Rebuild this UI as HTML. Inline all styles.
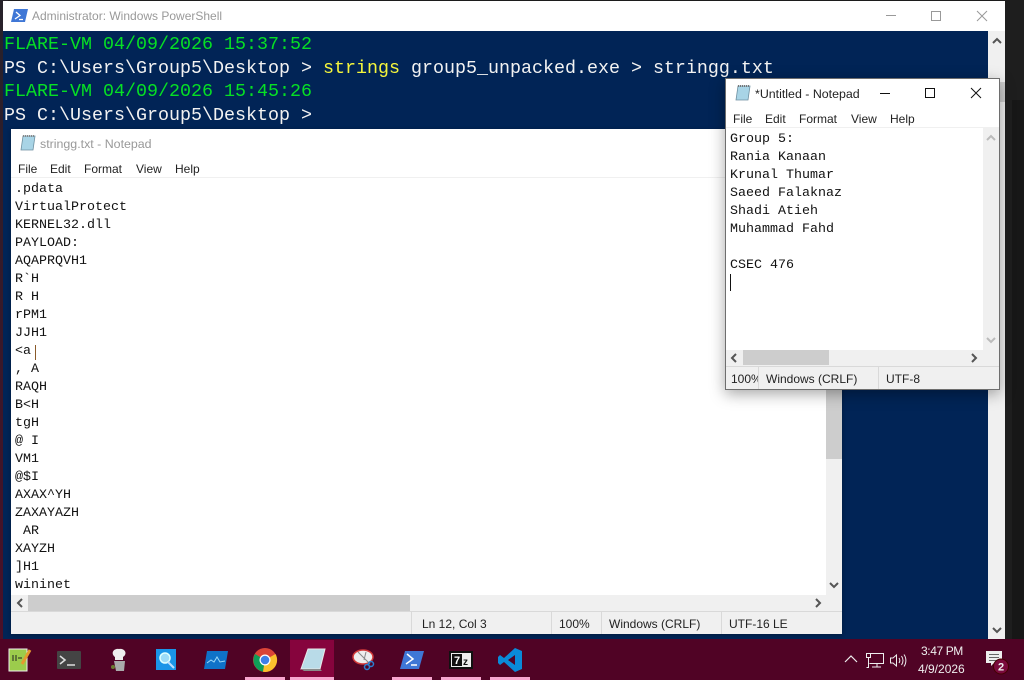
<!DOCTYPE html>
<html><head><meta charset="utf-8"><style>
html,body{margin:0;padding:0;width:1024px;height:680px;overflow:hidden;background:#1c1c1c;font-family:"Liberation Sans",sans-serif}
div{position:absolute;box-sizing:border-box}
.t{white-space:pre;position:absolute}
.ps{font:18.33px/24px "Liberation Mono",monospace;color:#f2f2f2;left:4px;white-space:pre;position:absolute}
.g{color:#06e024}.y{color:#f5f53c}
.ln{font:13.33px/18px "Liberation Mono",monospace;color:#111;white-space:pre;position:absolute}
.m{font-size:12px;color:#222;position:absolute;white-space:pre}
.pb{position:absolute;top:677px;width:40px;height:3px;background:#f7a6cf}
svg{position:absolute;overflow:visible}
</style></head><body>
<div style="left:0;top:0;width:8px;height:640px;background:linear-gradient(#26222a,#4a1028)"></div>
<div style="left:1005px;top:0;width:19px;height:640px;background:#1e1e1e"></div>
<div style="left:1012px;top:100px;width:12px;height:540px;background:#171717"></div>
<div style="left:3px;top:1px;width:1002px;height:30px;background:#fff"></div>
<div style="left:3px;top:31px;width:985px;height:608px;background:#012456"></div>
<div style="left:988px;top:31px;width:17px;height:608px;background:#f0f0f0"></div>
<div style="left:988px;top:82px;width:17px;height:20px;background:#cdcdcd"></div>
<svg style="left:992px;top:36px" width="10" height="10"><path d="M1 7L5 3L9 7" fill="none" stroke="#555" stroke-width="2"/></svg>
<svg style="left:992px;top:626px" width="10" height="10"><path d="M1 2L5 6L9 2" fill="none" stroke="#555" stroke-width="2"/></svg>
<svg style="left:11px;top:9px" width="17" height="14"><path d="M3 0H17L14 13H0Z" fill="#3f77d6"/><path d="M5 3L9 6.500L4 10M8 10.500H12" fill="none" stroke="#fff" stroke-width="1.300"/></svg>
<div class="t" style="left:32px;top:9px;font-size:12px;line-height:14px;color:#999">Administrator: Windows PowerShell</div>
<svg style="left:880px;top:8px" width="110" height="16"><path d="M6 7.500H16M51.500 3.500H60.500V12.500H51.500ZM97 3L107 13M107 3L97 13" fill="none" stroke="#999" stroke-width="1"/></svg>
<div class="ps g" style="top:33px">FLARE-VM 04/09/2026 15:37:52</div>
<div class="ps" style="top:57px">PS C:\Users\Group5\Desktop &gt; <span class="y">strings</span> group5_unpacked.exe &gt; stringg.txt</div>
<div class="ps g" style="top:80px">FLARE-VM 04/09/2026 15:45:26</div>
<div class="ps" style="top:104px">PS C:\Users\Group5\Desktop &gt;</div>

<!-- back notepad -->
<div style="left:11px;top:129px;width:831px;height:505px;background:#fff;box-shadow:0 1px 4px rgba(0,0,0,.3)"></div>
<svg style="left:20px;top:135px" width="16" height="16"><path d="M3 1H15L13 15H1Z" fill="#a8d4e6" stroke="#6d8fa0" stroke-width=".8"/><path d="M3 1H15" stroke="#888" stroke-width="2" stroke-dasharray="1 1"/></svg>
<div class="t" style="left:40px;top:137px;font-size:12.4px;line-height:14px;color:#999">stringg.txt - Notepad</div>
<div style="left:11px;top:177px;width:831px;height:1px;background:#f0f0f0"></div>
<div class="m" style="left:18px;top:162px">File</div><div class="m" style="left:50px;top:162px">Edit</div><div class="m" style="left:84px;top:162px">Format</div><div class="m" style="left:136px;top:162px">View</div><div class="m" style="left:175px;top:162px">Help</div>
<div class="ln" style="left:15px;top:181px">.pdata
VirtualProtect
KERNEL32.dll
PAYLOAD:
AQAPRQVH1
R`H
R H
rPM1
JJH1
&lt;a
, A
RAQH
B&lt;H
tgH
@ I
VM1
@$I
AXAX^YH
ZAXAYAZH
 AR
XAYZH
]H1
wininet</div>
<div style="left:35px;top:345px;width:1px;height:15px;background:#8a5a2a"></div>
<div style="left:826px;top:178px;width:16px;height:417px;background:#f0f0f0"></div>
<div style="left:826px;top:390px;width:16px;height:69px;background:#cdcdcd"></div>
<svg style="left:829px;top:582px" width="10" height="8"><path d="M1 1L5 5L9 1" fill="none" stroke="#555" stroke-width="2"/></svg>
<div style="left:11px;top:595px;width:831px;height:17px;background:#f0f0f0"></div>
<div style="left:28px;top:595px;width:382px;height:16px;background:#cdcdcd"></div>
<svg style="left:16px;top:598px" width="8" height="10"><path d="M6 1L2 5L6 9" fill="none" stroke="#555" stroke-width="2"/></svg>
<svg style="left:814px;top:598px" width="8" height="10"><path d="M2 1L6 5L2 9" fill="none" stroke="#555" stroke-width="2"/></svg>
<div style="left:11px;top:611px;width:831px;height:23px;background:#f0f0f0;border-top:1px solid #d9d9d9"></div>
<div style="left:411px;top:612px;width:1px;height:22px;background:#d9d9d9"></div>
<div style="left:551px;top:612px;width:1px;height:22px;background:#d9d9d9"></div>
<div style="left:601px;top:612px;width:1px;height:22px;background:#d9d9d9"></div>
<div style="left:721px;top:612px;width:1px;height:22px;background:#d9d9d9"></div>
<div class="m" style="left:422px;top:617px">Ln 12, Col 3</div><div class="m" style="left:559px;top:617px">100%</div><div class="m" style="left:609px;top:617px">Windows (CRLF)</div><div class="m" style="left:729px;top:617px">UTF-16 LE</div>

<!-- front notepad -->
<div style="left:725px;top:78px;width:275px;height:312px;background:#fff;border:1px solid #6e6e6e;box-shadow:0 4px 14px rgba(0,0,0,.35)"></div>
<svg style="left:735px;top:85px" width="16" height="16"><path d="M3 1H15L13 15H1Z" fill="#a8d4e6" stroke="#6d8fa0" stroke-width=".8"/><path d="M3 1H15" stroke="#777" stroke-width="2" stroke-dasharray="1 1"/></svg>
<div class="t" style="left:755px;top:87px;font-size:12.4px;line-height:14px;color:#222">*Untitled - Notepad</div>
<svg style="left:880px;top:87px" width="105" height="14"><path d="M0 6.500H10M45.500 1.500H54.500V10.500H45.500ZM91 1L101 11M101 1L91 11" fill="none" stroke="#111" stroke-width="1"/></svg>
<div class="m" style="left:733px;top:112px">File</div><div class="m" style="left:765px;top:112px">Edit</div><div class="m" style="left:799px;top:112px">Format</div><div class="m" style="left:851px;top:112px">View</div><div class="m" style="left:890px;top:112px">Help</div>
<div style="left:726px;top:127px;width:273px;height:1px;background:#f0f0f0"></div>
<div class="ln" style="left:730px;top:131px">Group 5:
Rania Kanaan
Krunal Thumar
Saeed Falaknaz
Shadi Atieh
Muhammad Fahd

CSEC 476</div>
<div style="left:730px;top:274px;width:1px;height:17px;background:#111"></div>
<div style="left:983px;top:128px;width:16px;height:222px;background:#f0f0f0"></div>
<svg style="left:986px;top:134px" width="10" height="8"><path d="M1 6L5 2L9 6" fill="none" stroke="#bbb" stroke-width="2"/></svg>
<svg style="left:986px;top:337px" width="10" height="8"><path d="M1 1L5 5L9 1" fill="none" stroke="#bbb" stroke-width="2"/></svg>
<div style="left:726px;top:350px;width:273px;height:16px;background:#f0f0f0"></div>
<div style="left:743px;top:350px;width:86px;height:15px;background:#cdcdcd"></div>
<svg style="left:730px;top:353px" width="8" height="10"><path d="M6 1L2 5L6 9" fill="none" stroke="#555" stroke-width="2"/></svg>
<svg style="left:970px;top:353px" width="8" height="10"><path d="M2 1L6 5L2 9" fill="none" stroke="#555" stroke-width="2"/></svg>
<div style="left:726px;top:366px;width:273px;height:23px;background:#f0f0f0;border-top:1px solid #d9d9d9"></div>
<div style="left:758px;top:367px;width:1px;height:22px;background:#d9d9d9"></div>
<div style="left:878px;top:367px;width:1px;height:22px;background:#d9d9d9"></div>
<div class="m" style="left:731px;top:372px;width:27px;overflow:hidden">100%</div><div class="m" style="left:766px;top:372px">Windows (CRLF)</div><div class="m" style="left:886px;top:372px">UTF-8</div>

<!-- taskbar -->
<div style="left:0;top:639px;width:1024px;height:41px;background:#500325"></div>
<div style="left:290px;top:640px;width:44px;height:40px;background:#86043d"></div>
<div class="pb" style="left:245px"></div><div class="pb" style="left:290px;width:44px"></div><div class="pb" style="left:392px"></div><div class="pb" style="left:441px"></div><div class="pb" style="left:490px"></div>
<svg style="left:8px;top:648px" width="24" height="24"><path d="M1 1H19V23H1Z" fill="#9ccc4c" stroke="#eee"/><path d="M5 7V13M8 7V13M10 10H14" stroke="#222"/><path d="M14 16L22 2" stroke="#e59a2e" stroke-width="3"/></svg>
<svg style="left:57px;top:651px" width="24" height="18"><rect width="24" height="18" rx="1" fill="#444"/><path d="M3 5L8 9L3 13M10 14H18" fill="none" stroke="#ddd" stroke-width="1.600"/></svg>
<svg style="left:110px;top:648px" width="18" height="24"><path d="M5 9C0 5 4 0 9 1C15 0 18 6 13 9V12H5Z" fill="#eee"/><path d="M4 13H15L14 23H6Z" fill="#aaa"/><circle cx="3" cy="19" r="2" fill="#6a7a30"/></svg>
<svg style="left:156px;top:649px" width="20" height="21"><rect width="20" height="21" fill="#1a95e8"/><circle cx="9" cy="9" r="5" fill="#9cdcf8" stroke="#dff" stroke-width="1.500"/><path d="M12 13L18 19" stroke="#bdf" stroke-width="2"/></svg>
<svg style="left:204px;top:651px" width="24" height="18"><path d="M3 0H24L21 18H0Z" fill="#0f72c8"/><path d="M3 12L7 9L10 11L13 6L16 11L21 10" fill="none" stroke="#9cd8f8"/></svg>
<svg style="left:253px;top:648px" width="24" height="24" viewBox="0 0 24 24"><circle cx="12" cy="12" r="12" fill="#db4437"/><path d="M12 12L2 6A12 12 0 0 0 10 23.800Z" fill="#0f9d58"/><path d="M12 12L22.500 6A12 12 0 0 1 10 23.800Z" fill="#fbc02d"/><circle cx="12" cy="12" r="5.500" fill="#fff"/><circle cx="12" cy="12" r="4.300" fill="#3f7fe8"/></svg>
<svg style="left:301px;top:649px" width="24" height="22"><path d="M7 0H24L19 20H0Z" fill="#b9dbe8" stroke="#e8e8e8"/><path d="M0 20H19L21 22H3Z" fill="#8a8a8a"/></svg>
<svg style="left:352px;top:649px" width="24" height="22"><ellipse cx="11" cy="8" rx="10" ry="7" fill="#eee" stroke="#d23a3a" stroke-width="1.500"/><path d="M6 3L18 15M14 3L12 11" stroke="#888"/><circle cx="19" cy="15" r="2.500" fill="none" stroke="#2a7fd0" stroke-width="1.500"/><circle cx="15" cy="18" r="2.500" fill="none" stroke="#2a7fd0" stroke-width="1.500"/></svg>
<svg style="left:400px;top:651px" width="24" height="18"><path d="M5 0H24L19 18H0Z" fill="#3f77d6"/><path d="M7 3L13 8L6 13M11 14H17" fill="none" stroke="#fff" stroke-width="1.500"/></svg>
<svg style="left:449px;top:651px" width="24" height="18"><rect width="24" height="18" fill="#111"/><rect x="2" y="2" width="20" height="14" fill="#eee"/><rect x="3" y="3" width="10" height="12" fill="#111"/><text x="5" y="13" font-family="Liberation Sans" font-weight="bold" font-size="11" fill="#fff">7</text><text x="14" y="14" font-family="Liberation Sans" font-weight="bold" font-size="10" fill="#111">z</text></svg>
<svg style="left:498px;top:648px" width="24" height="24"><path d="M17 0L24 3V21L17 24L6 14L2 17L0 15V9L2 7L6 10ZM17 7L10 12L17 17Z" fill="#0a8ad8"/></svg>
<svg style="left:844px;top:654px" width="14" height="10"><path d="M1 8L7 2L13 8" fill="none" stroke="#eee" stroke-width="1.200"/></svg>
<svg style="left:866px;top:653px" width="18" height="15"><path d="M3.500 .5H17.500V10.500H3.500M11 10.500V14M6 14H15M.5 .5H4.500V4.500H.5ZM2.500 5V14.500H.5" fill="none" stroke="#eee"/></svg>
<svg style="left:890px;top:654px" width="17" height="13"><path d="M.5 4H3L6.500 1V12L3 9H.5ZM9 4C10 5.500 10 7.500 9 9M11.500 2C13.500 5 13.500 8 11.500 11M14 .5C16.500 4 16.500 9 14 12.500" fill="none" stroke="#eee"/></svg>
<div class="t" style="left:921px;top:644px;font-size:12px;line-height:14px;color:#eee;letter-spacing:-.4px">3:47 PM</div>
<div class="t" style="left:918px;top:662px;font-size:12px;line-height:14px;color:#eee">4/9/2026</div>
<svg style="left:986px;top:651px" width="25" height="26"><path d="M0 0H16V12H8L5 15V12H0Z" fill="#eee"/><path d="M3 3.500H13M3 6.500H13M3 9.500H13" stroke="#666"/><circle cx="15" cy="15.500" r="7.500" fill="#7a0a3c" stroke="#400"/><text x="15" y="19.500" text-anchor="middle" font-family="Liberation Sans" font-weight="bold" font-size="11" fill="#eee">2</text></svg>
</body></html>
